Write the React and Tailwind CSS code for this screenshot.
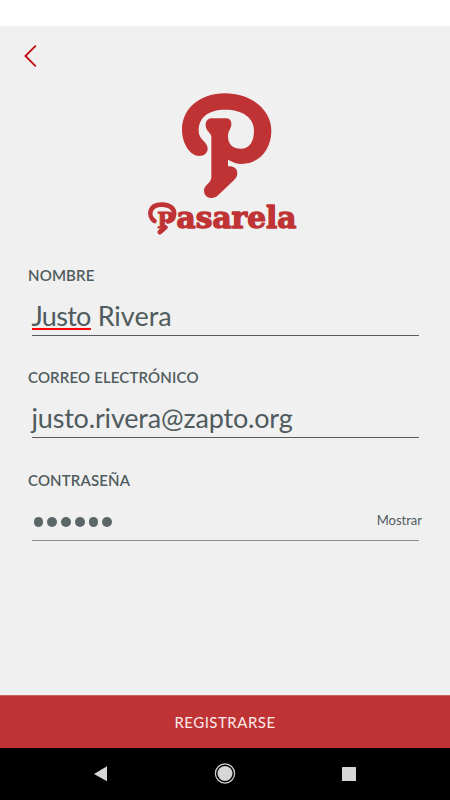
import React from 'react';

const BackIcon = () => (
  <svg width="14" height="24" viewBox="0 0 14 24" fill="none" stroke="#c4080c" strokeWidth="1.8">
    <path d="M12.8 1.6 2.4 12 12.8 22.4" />
  </svg>
);

const LogoMark = () => (
  <svg width="110" height="115" viewBox="0 0 330 345" fill="#c03335">
    <path d="M88 213C60 213 36 175 36 135C36 70 90 25 165 25C245 25 304 75 304 137C304 195 265 237 215 237C200 237 185 230 174 224V244C195 244 202 252 202 265C202 275 197 281 190 287L145 330C138 337 132 339 125 339C112 339 102 330 102 317C102 309 106 304 112 298C120 290 124 285 124 275V155C124 145 107 138 107 120C107 107 114 100 126 100H166C178 100 184 106 184 117C184 132 174 137 174 155C174 178 190 191 212 191C238 191 252 170 252 137C252 98 218 74 165 74C115 74 86 97 86 137C86 165 113 170 113 190C113 204 103 213 88 213Z" />
  </svg>
);

const Logo = () => (
  <div className="flex flex-col items-center">
    <LogoMark />
    <svg width="160" height="40" viewBox="0 0 160 40" className="-ml-1" fill="#c03335" stroke="#c03335" strokeLinejoin="round">
      <text className="font-['DejaVu_Serif'] font-bold">
        <tspan x="14" y="28" strokeWidth="0.900" className="text-[23px]">P</tspan>
        <tspan x="33.500" y="28.300" strokeWidth="1.300" textLength="120" lengthAdjust="spacingAndGlyphs" className="text-[29px]">asarela</tspan>
      </text>
      {/* curl in front of the first letter and its slanted foot */}
      <g fill="none" strokeWidth="4.600" strokeLinecap="round">
        <path d="M11.500 21C5 17 5 4.500 19 4.600C28 4.700 32 9.500 31 15C30.500 19 28 21 25 21.500" />
        <path d="M22 27.500 17 32" strokeWidth="5" />
      </g>
    </svg>
  </div>
);

const Field = ({ label, line = 'border-[#5b5b5e]', children }) => (
  <div className="h-[102.3px]">
    <p className="pl-[28px] text-[15px] leading-5 font-semibold tracking-[0.15px]">{label}</p>
    <div className={`mr-[31px] ml-[31.5px] mt-2 flex h-[43px] items-center border-b ${line}`}>
      {children}
    </div>
  </div>
);

const App = () => {
  return (
    <div className="flex h-[800px] w-[450px] flex-col overflow-hidden bg-[#f0f0f0] font-['Lato',sans-serif] text-[#4f5b5d]">
      <div className="h-[26px] bg-white"></div>

      <div className="h-[59px] pl-[23px] pt-[18px]">
        <BackIcon />
      </div>

      <Logo />

      <div className="flex-1 pt-[25px]">
        <Field label="NOMBRE">
          <span className="pt-[3px] text-[27px] leading-8">
            <span className="relative inline-block tracking-[-0.7px]">
              Justo
              <span className="absolute bottom-[2px] left-0 h-[2px] w-full bg-[#fb0507]"></span>
            </span>{' '}
            Rivera
          </span>
        </Field>
        <Field label="CORREO ELECTRÓNICO">
          <span className="pt-[3px] text-[27px] leading-8 tracking-[-0.18px]">justo.rivera@zapto.org</span>
        </Field>
        <Field label="CONTRASEÑA" line="border-[#8d8d8f]">
          <div className="flex gap-1 pt-[6px] pl-[2px]">
            {[...Array(6)].map((_, i) => (
              <span key={i} className="h-[10px] w-[9.8px] rounded-full bg-[#5b6668]"></span>
            ))}
          </div>
          <button className="-mr-[3px] ml-auto pt-[4px] text-[13px]">Mostrar</button>
        </Field>
      </div>

      <button className="h-[53px] border-t border-[#c8605f] bg-[#c03335] text-[15px] tracking-[0.5px] text-[#fbeaea]">
        REGISTRARSE
      </button>

      {/* Android navigation bar */}
      <div className="flex h-[52px] items-center bg-black">
        <svg width="450" height="52" viewBox="0 0 450 52" fill="#d6d6d6">
          <path d="M94 26 107 18.300V33.300Z" />
          <circle cx="225" cy="25.500" r="7.500" />
          <circle cx="225" cy="25.500" r="9.600" fill="none" stroke="#d6d6d6" strokeWidth="1.200" />
          <rect x="342" y="19" width="14" height="14" rx="0.500" />
        </svg>
      </div>
    </div>
  );
};

export default App;
